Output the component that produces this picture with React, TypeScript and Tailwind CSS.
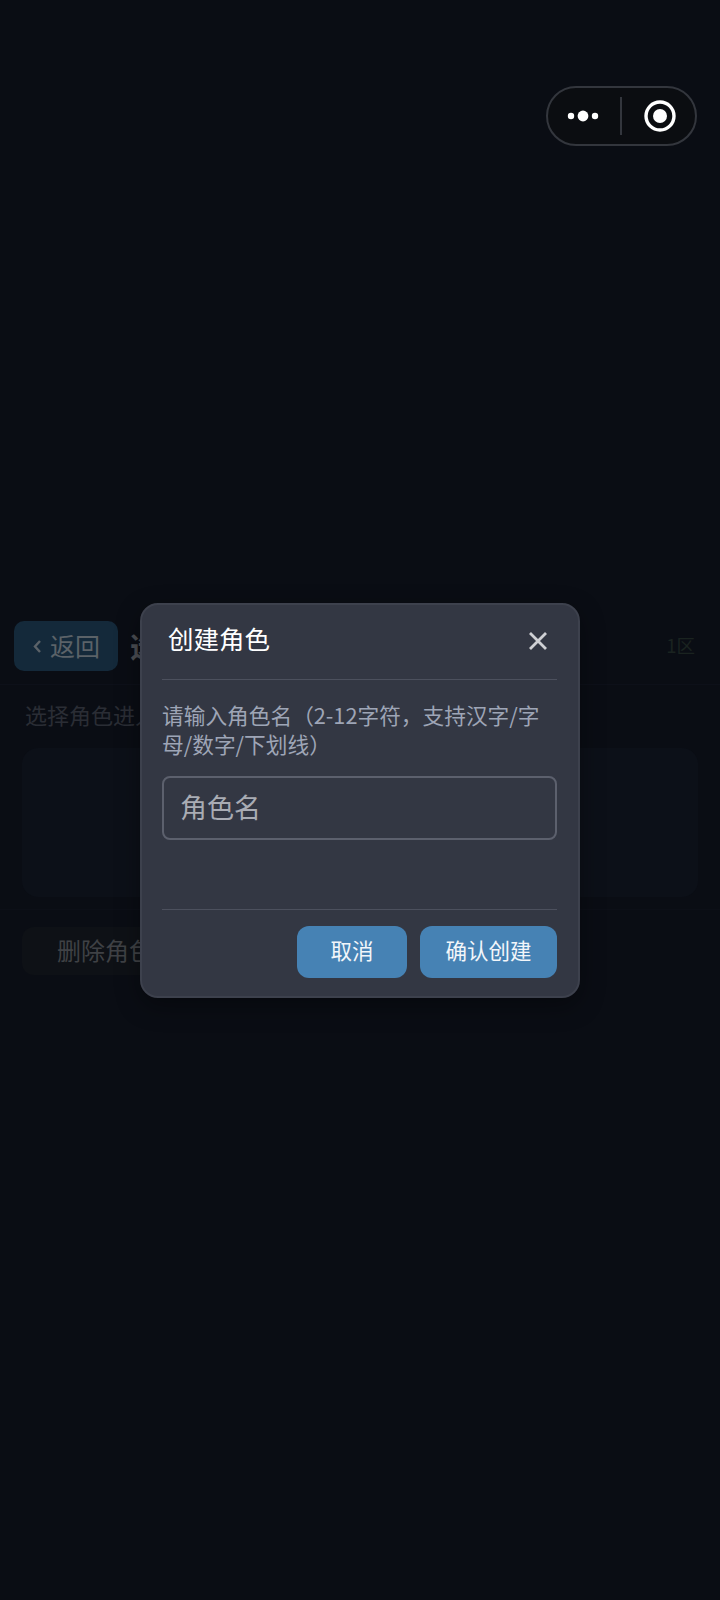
const cjk = "font-['Noto_Sans_CJK_SC','Roboto',sans-serif]";

function CapsuleMenu() {
  return (
    <div className="absolute left-[546px] top-[86px] flex h-[60px] w-[151px] items-center rounded-full border-2 border-[#33363d] bg-[#0b0d11]">
      <div className="flex w-[72px] items-center justify-center">
        <svg width="34" height="14" viewBox="0 0 34 14" fill="#fff">
          <circle cx="4" cy="7" r="3.2" />
          <circle cx="16" cy="7" r="5.4" />
          <circle cx="28" cy="7" r="3.2" />
        </svg>
      </div>
      <div className="h-[38px] w-[2px] bg-[#33363d]" />
      <div className="flex flex-1 items-center justify-center pl-[2px]">
        <svg width="32" height="32" viewBox="0 0 32 32" fill="none">
          <circle cx="16" cy="16" r="14" stroke="#fff" strokeWidth="3.4" />
          <circle cx="16" cy="16" r="7" fill="#fff" />
        </svg>
      </div>
    </div>
  );
}

function CharacterPage() {
  return (
    <div className="flex flex-col pt-[621px]">
      <div className="flex h-[64px] items-start justify-between border-b border-[#0d1019] pl-[14px] pr-[25px]">
        <div className="flex items-center gap-3">
          <div className="flex h-[50px] w-[104px] items-center justify-center gap-2 rounded-[10px] bg-[#14293a] text-[25px] text-[#5b6268]">
            <svg width="10" height="16" viewBox="0 0 10 16" fill="none">
              <path d="M8 3 3 8.5 8 14" stroke="#5b6268" strokeWidth="2.4" />
            </svg>
            <span>返回</span>
          </div>
          <span className="text-[28px] font-bold text-[#4a4d52]">选择角色</span>
        </div>
        <span className="mt-[11px] text-[18.5px] text-[#1a2320]">1区</span>
      </div>
      <div className="px-[22px]">
        <p className="mt-[14px] pl-[3px] text-[22px] leading-[30px] text-[#2a2d35]">选择角色进入游戏</p>
        <div className="mt-[19px] h-[149px] rounded-2xl bg-[#0c1018]" />
      </div>
      <div className="mt-[12px] border-t border-[#0c0f17] px-[22px] pt-[17px]">
        <div className="flex h-[48px] w-[190px] items-center rounded-xl bg-[#0e1116] pb-[2px] pl-[35px] text-[24px] text-[#3f4145]">
          删除角色
        </div>
      </div>
    </div>
  );
}

function CreateDialog() {
  return (
    <div className="absolute inset-0 flex items-center justify-center">
      <div className="flex h-[395px] w-[440px] flex-col rounded-[18px] border-2 border-[#3d414d] bg-[#333743] pl-[20px] pr-[21px] shadow-[0_8px_24px_rgba(0,0,0,0.35)]">
        <div className="flex h-[75px] shrink-0 items-center justify-between border-b border-[#4c505d] pb-[1px] pl-[6px] pr-[9px]">
          <span className="pb-[5px] text-[25.5px] text-white">创建角色</span>
          <svg width="20" height="20" viewBox="0 0 20 20" fill="none">
            <path d="M2 2 18 18M18 2 2 18" stroke="#cfd0d4" strokeWidth="2.8" />
          </svg>
        </div>
        <p className="mt-[20px] text-[21.7px] leading-[29px] text-[#9ea5b6]">
          请输入角色名（2-12字符，支持汉字/字母/数字/下划线）
        </p>
        <div className="mt-[18px] flex h-[64px] shrink-0 items-center rounded-lg border-2 border-[#5c606d] pl-[16px] text-[27px] text-[#a9acb4]">
          角色名
        </div>
        <div className="mt-[69px] flex flex-1 items-start justify-end gap-[13px] border-t border-[#4c505d] pt-[16px]">
          <div className="flex h-[52px] w-[110px] items-center justify-center rounded-xl bg-[#4682b4] pb-[2px] text-[21.5px] text-[#f2f6fa]">
            取消
          </div>
          <div className="flex h-[52px] w-[137px] items-center justify-center rounded-xl bg-[#4682b4] pb-[2px] text-[21.5px] text-[#f2f6fa]">
            确认创建
          </div>
        </div>
      </div>
    </div>
  );
}

export default function App() {
  return (
    <div className={`relative h-[1600px] w-[720px] overflow-hidden bg-[#0a0d14] ${cjk}`}>
      <CharacterPage />
      <CapsuleMenu />
      <CreateDialog />
    </div>
  );
}
